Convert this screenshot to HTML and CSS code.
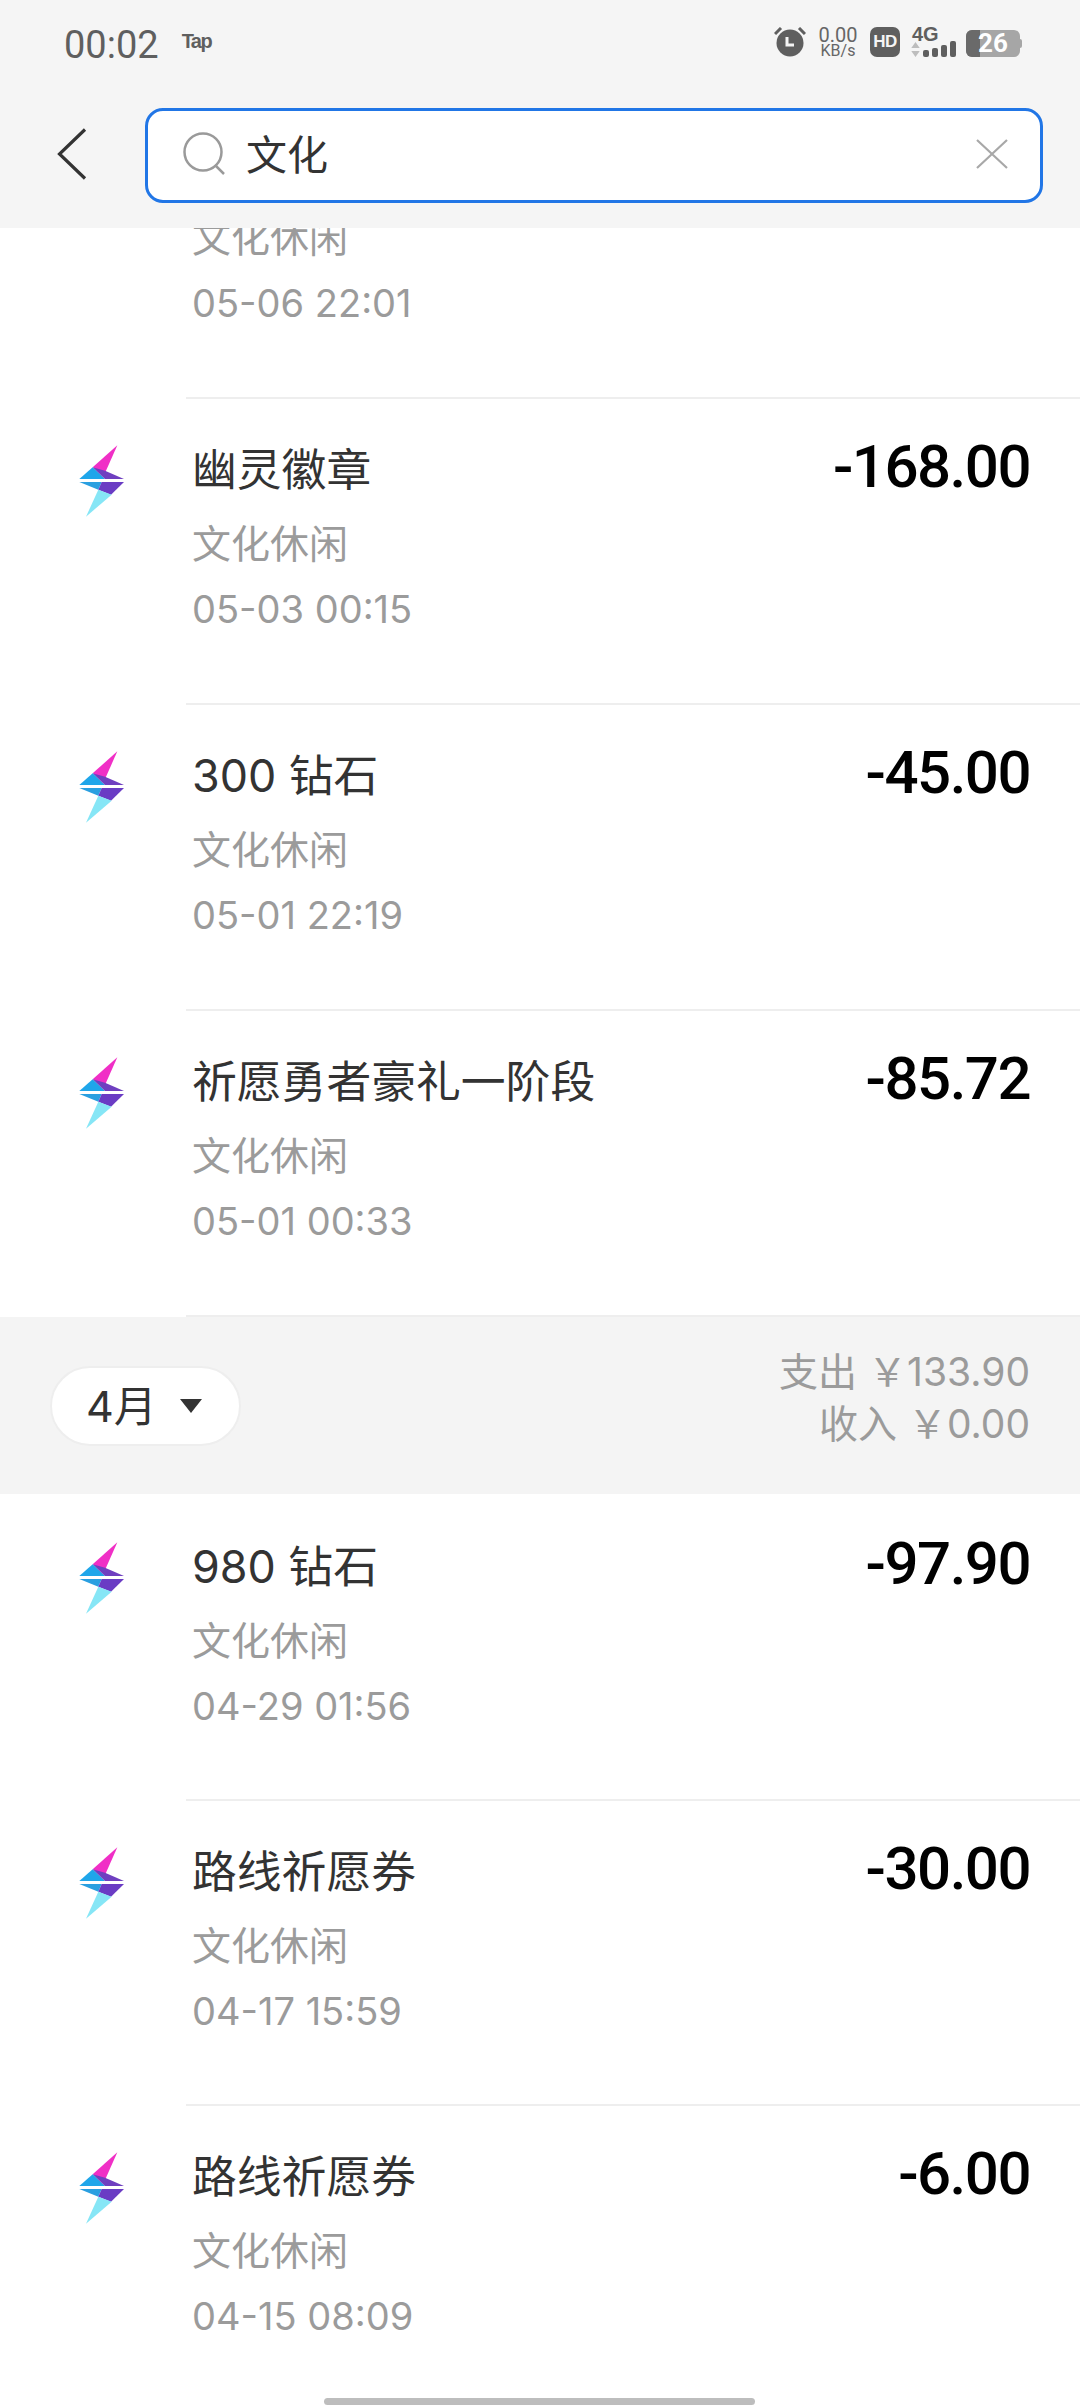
FILE: index.html
```html
<!DOCTYPE html>
<html lang="zh-CN">
<head>
<meta charset="utf-8">
<title>账单搜索</title>
<link rel="stylesheet" href="styles.css">
</head>
<body>
<svg class="defs" width="0" height="0">
  <symbol id="bolt" viewBox="0 0 360 360">
    <polygon points="232,82 158,148 195,165" fill="#f02fc6"/>
    <polygon points="158,148 118,183 195,183" fill="#1fa6ea"/>
    <polygon points="158,148 195,158 252,183 195,183" fill="#6f3fc0"/>
    <polygon points="118,192 185,192 175,215" fill="#2a9fe0"/>
    <polygon points="185,192 252,192 213,230 175,215" fill="#6a3cc4"/>
    <polygon points="175,215 215,230 138,296" fill="#86e6f6"/>
  </symbol>
</svg>
<div class="phone">
  <header class="top">
    <div class="status">
      <div class="status-left">
        <span class="time">00:02</span>
        <span class="tap">Tap</span>
      </div>
      <div class="status-right">
        <svg class="alarm" viewBox="0 0 32 30">
          <circle cx="16" cy="16" r="13.5" fill="#5f5f5f"/>
          <path d="M13 10v8h7" fill="none" stroke="#f5f5f5" stroke-width="3"/>
          <path d="M1 7 7 1M31 7 25 1" stroke="#5f5f5f" stroke-width="3" fill="none"/>
        </svg>
        <div class="speed"><span class="speed-num">0.00</span><span class="speed-unit">KB/s</span></div>
        <span class="hd">HD</span>
        <div class="net">
          <span class="net-label">4G</span>
          <div class="net-bars">
            <svg class="arrows" viewBox="0 0 9 16"><path d="M4.500 0 9 6.500H0zM4.500 16 0 9.500H9z" fill="#bdbdbd"/></svg>
            <i class="bar b1"></i><i class="bar b2"></i><i class="bar b3"></i><i class="bar b4"></i>
          </div>
        </div>
        <div class="battery"><i class="battery-fill"></i><span class="battery-num">26</span><i class="battery-cap"></i></div>
      </div>
    </div>
    <div class="searchbar">
      <svg class="back" viewBox="0 0 30 52"><path d="M28 1.500 2.500 26 28 50.500" fill="none" stroke="#333" stroke-width="3.200"/></svg>
      <div class="search">
        <svg class="lens" viewBox="0 0 44 44"><circle cx="20" cy="20" r="18.500" fill="none" stroke="#9a9a9a" stroke-width="2.500"/><path d="M32 33 41 42" stroke="#9a9a9a" stroke-width="2.500"/></svg>
        <span class="query">文化</span>
        <svg class="clear" viewBox="0 0 32 30"><path d="M1 1 31 29M31 1 1 29" stroke="#a8a8a8" stroke-width="2.200"/></svg>
      </div>
    </div>
  </header>

  <main class="list">
    <div class="row row-first">
      <svg class="bolt"><use href="#bolt"/></svg>
      <div class="info"><div class="title">&nbsp;</div><div class="sub">文化休闲</div><div class="date">05-06 22:01</div></div>
    </div>
    <div class="row row-rule">
      <svg class="bolt"><use href="#bolt"/></svg>
      <div class="info"><div class="title">幽灵徽章</div><div class="sub">文化休闲</div><div class="date">05-03 00:15</div></div>
      <div class="amount">-168.00</div>
    </div>
    <div class="row row-rule">
      <svg class="bolt"><use href="#bolt"/></svg>
      <div class="info"><div class="title">300 钻石</div><div class="sub">文化休闲</div><div class="date">05-01 22:19</div></div>
      <div class="amount">-45.00</div>
    </div>
    <div class="row row-rule">
      <svg class="bolt"><use href="#bolt"/></svg>
      <div class="info"><div class="title">祈愿勇者豪礼一阶段</div><div class="sub">文化休闲</div><div class="date">05-01 00:33</div></div>
      <div class="amount">-85.72</div>
    </div>
    <div class="rule"></div>
    <section class="band">
      <div class="pill"><span class="month">4月</span><i class="caret"></i></div>
      <div class="totals"><div>支出 ￥133.90</div><div>收入 ￥0.00</div></div>
    </section>
    <div class="row row-short">
      <svg class="bolt"><use href="#bolt"/></svg>
      <div class="info"><div class="title">980 钻石</div><div class="sub">文化休闲</div><div class="date">04-29 01:56</div></div>
      <div class="amount">-97.90</div>
    </div>
    <div class="row row-rule row-short">
      <svg class="bolt"><use href="#bolt"/></svg>
      <div class="info"><div class="title">路线祈愿券</div><div class="sub">文化休闲</div><div class="date">04-17 15:59</div></div>
      <div class="amount">-30.00</div>
    </div>
    <div class="row row-rule row-short">
      <svg class="bolt"><use href="#bolt"/></svg>
      <div class="info"><div class="title">路线祈愿券</div><div class="sub">文化休闲</div><div class="date">04-15 08:09</div></div>
      <div class="amount">-6.00</div>
    </div>
  </main>
  <div class="home"></div>
</div>
</body>
</html>
```

FILE: styles.css
```css
* { box-sizing: border-box; }
html, body { margin: 0; padding: 0; background: #fff; }
body { font-family: Inter, "Noto Sans CJK SC", sans-serif; }
.defs { position: absolute; }
.phone { position: relative; width: 1080px; height: 2408px; overflow: hidden; }

.top { position: relative; z-index: 2; height: 228px; background: #f5f5f5; display: flex; flex-direction: column; }
.status { height: 108px; padding: 26px 60px 0 64px; display: flex; justify-content: space-between; align-items: flex-start; }
.status-left { display: flex; align-items: flex-start; gap: 23px; }
.time { font: 400 38px/36px Roboto, sans-serif; color: #5f5f5f; margin-top: 1px; }
.tap { font: 700 20px/22px "Liberation Sans", sans-serif; color: #5f5f5f; letter-spacing: -1.500px; margin-top: 4px; }
.status-right { display: flex; align-items: flex-start; margin-top: 1px; }
.alarm { width: 32px; height: 30px; }
.speed { width: 40px; margin-left: 12px; display: flex; flex-direction: column; align-items: center; color: #666; font-family: Roboto, sans-serif; }
.speed-num { font-size: 20px; line-height: 16px; }
.speed-unit { font-size: 16px; line-height: 15px; }
.hd { width: 30px; height: 30px; margin-left: 12px; border-radius: 7px; background: #5f5f5f; color: #f5f5f5; font: 700 17px/30px "Liberation Sans", sans-serif; text-align: center; letter-spacing: -.5px; }
.net { width: 46px; margin-left: 11px; display: flex; flex-direction: column; color: #5f5f5f; }
.net-label { font: 700 20px/15px "Liberation Sans", sans-serif; padding-left: 1px; }
.net-bars { display: flex; align-items: flex-end; height: 15px; gap: 3px; }
.arrows { width: 9px; height: 15px; }
.bar { display: block; width: 6px; background: #5f5f5f; border-radius: 2px; }
.b1 { height: 7px; } .b2 { height: 9px; } .b3 { height: 12px; } .b4 { height: 16px; }
.battery { position: relative; width: 54px; height: 27px; margin: 3px 0 0 9px; background: #a6a6a6; border-radius: 6px; }
.battery-fill { position: absolute; left: 0; top: 0; bottom: 0; width: 14px; background: #6a6a6a; border-radius: 6px 0 0 6px; }
.battery-num { position: absolute; left: 0; right: 0; top: 0; text-align: center; font: 700 26px/27px Roboto, sans-serif; color: #fff; }
.battery-cap { position: absolute; right: -2px; top: 9px; width: 3px; height: 9px; background: #a6a6a6; border-radius: 0 2px 2px 0; }

.searchbar { display: flex; align-items: center; padding-left: 57px; }
.back { width: 30px; height: 52px; margin-top: -4px; }
.search { width: 898px; height: 95px; margin-left: 58px; background: #fff; border: 3px solid #2176e6; border-radius: 18px; display: flex; align-items: center; padding: 0 32px 0 35px; }
.lens { width: 44px; height: 44px; margin-top: -4px; }
.query { font-size: 41px; line-height: 50px; color: #333; margin-left: 19px; flex: 1; margin-top: -2px; }
.clear { width: 32px; height: 30px; margin-top: -4px; }

.list { height: 2180px; overflow: hidden; }
.row { height: 306px; display: flex; padding: 2px 50px 0 0; }
.row-rule { background: linear-gradient(#eee, #eee) 186px 0 / 100% 2px no-repeat; }
.row-first { margin-top: -137px; }
.row-short { height: 305px; }
.bolt { width: 120px; height: 120px; margin: 19px 0 0 40px; flex: none; }
.info { margin-left: 32px; padding-top: 48px; flex: 1; }
.title { font-size: 44.800px; line-height: 50px; color: #333; margin-top: -2px; }
.sub { font-family: "Noto Sans CJK SC", sans-serif; font-size: 39px; line-height: 68px; margin-top: 12px; color: #9b9b9b; }
.date { font: 400 38px/68px Inter, sans-serif; color: #9b9b9b; }
.amount { font: 500 60px/60px Roboto, sans-serif; letter-spacing: -1.500px; color: #000; margin-top: 38px; }

.rule { height: 2px; margin-left: 186px; background: #eee; }
.band { height: 177px; background: #f4f4f4; display: flex; justify-content: space-between; align-items: center; padding: 0 50px; }
.pill { width: 191px; height: 80px; background: #fff; border: 2px solid #eee; border-radius: 40px; display: flex; align-items: center; padding-left: 34px; }
.month { font-size: 43px; line-height: 50px; color: #333; width: 94px; }
.caret { width: 0; height: 0; border-left: 11px solid transparent; border-right: 11px solid transparent; border-top: 14px solid #333; }
.totals { text-align: right; font-size: 39px; line-height: 52px; color: #9b9b9b; margin-bottom: 16px; }

.home { position: absolute; left: 324px; top: 2398px; width: 431px; height: 7px; border-radius: 4px; background: #bdbdbd; }
```
